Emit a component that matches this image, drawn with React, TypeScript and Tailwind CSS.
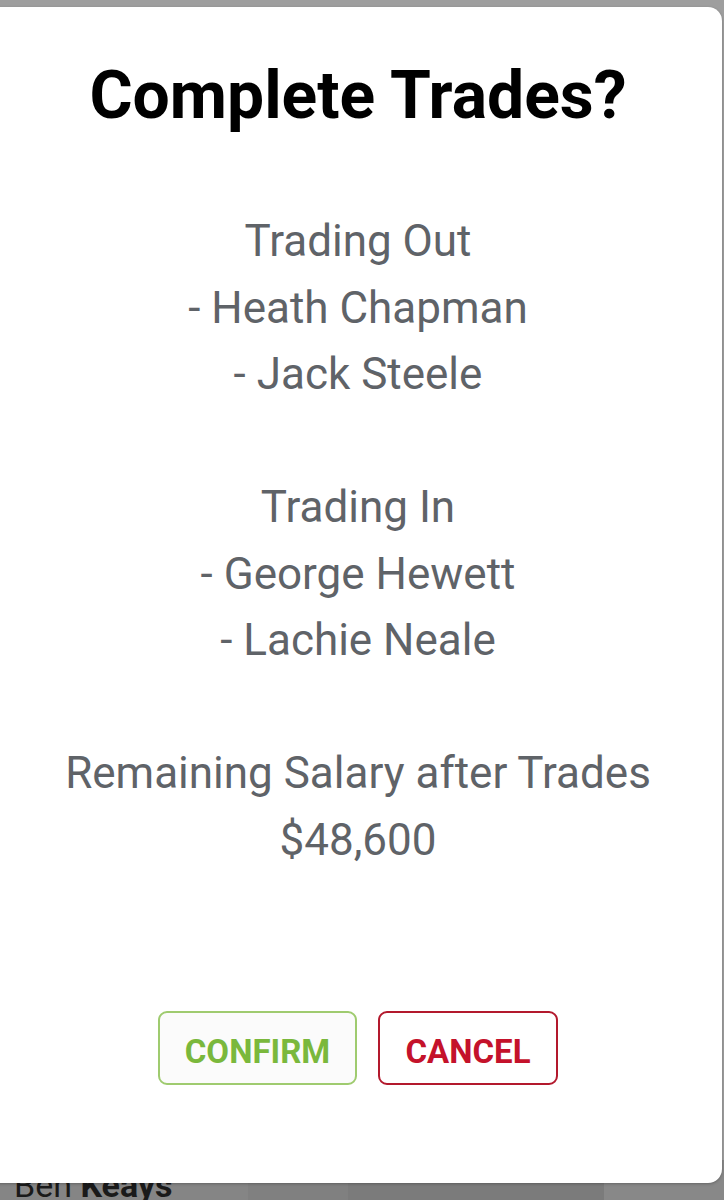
import React from 'react'

const tradingOut = ['Heath Chapman', 'Jack Steele']
const tradingIn = ['George Hewett', 'Lachie Neale']

function PlayerBlock({ title, players }: { title: string; players: string[] }) {
    return (
        <div className="flex flex-col items-center">
            <p>{title}</p>
            {players.map((p) => (
                <p key={p}>- {p}</p>
            ))}
        </div>
    )
}

export default function App() {
    return (
        <div
            className="relative w-[724px] h-[1200px] overflow-hidden bg-[#9e9e9e] flex flex-col justify-end"
            style={{ fontFamily: 'Roboto, "Liberation Sans", sans-serif' }}
        >
            {/* team list behind the dialog */}
            <div className="h-[40px] flex bg-[#858585]">
                <div className="w-[248px] flex items-end pl-[14px] text-[34px] leading-[30px] text-[#1a1a1a]">
                    <span>Ben&nbsp;</span>
                    <span className="font-bold">Keays</span>
                </div>
                <div className="w-[100px] bg-[#808080]" />
                <div className="flex-1 bg-[#7b7b7b]" />
                <div className="w-[120px] bg-[#888888]" />
            </div>

            {/* confirm dialog */}
            <div className="absolute left-[-20px] top-[7px] w-[742px] h-[1176px] bg-white rounded-[14px] shadow-[0_1px_3px_rgba(0,0,0,0.25)] flex flex-col items-center pl-[20px] pr-[6px]">
                <h1 className="mt-[51px] text-[66px] leading-[76px] font-bold text-black">
                    Complete Trades?
                </h1>

                <div className="mt-[74px] flex flex-col items-center gap-[66.5px] text-[44px] leading-[66.5px] text-[#5f6368]">
                    <PlayerBlock title="Trading Out" players={tradingOut} />
                    <PlayerBlock title="Trading In" players={tradingIn} />
                    <div className="flex flex-col items-center">
                        <p>Remaining Salary after Trades</p>
                        <p>$48,600</p>
                    </div>
                </div>

                <div className="mt-auto mb-[98px] flex gap-[21px]">
                    <button className="w-[199px] h-[74px] pt-[8px] rounded-[9px] border-2 border-[#9fcb6f] bg-[#fbfbfb] text-[#7ab83c] text-[33px] font-bold">
                        CONFIRM
                    </button>
                    <button className="w-[180px] h-[74px] pt-[8px] rounded-[9px] border-2 border-[#b3192d] bg-white text-[#c4122b] text-[33px] font-bold">
                        CANCEL
                    </button>
                </div>
            </div>
        </div>
    )
}
